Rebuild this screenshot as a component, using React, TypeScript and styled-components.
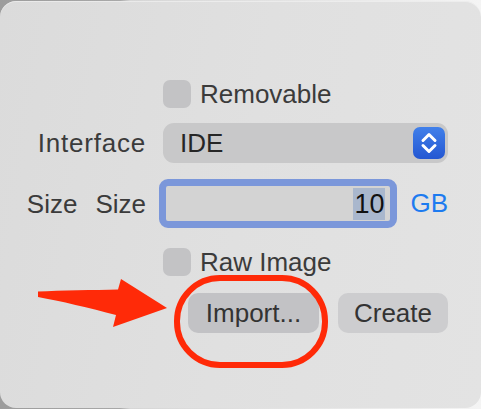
import React from "react";
import styled, { createGlobalStyle } from "styled-components";

const Global = createGlobalStyle`
  html, body { margin: 0; padding: 0; }
  body {
    width: 481px;
    height: 409px;
    overflow: hidden;
    background: linear-gradient(90deg, #9c9c9c 0px, #a8a8a8 120px, #d6d6d6 130px, #f4f4f4 481px);
    font-family: "Liberation Sans", Arial, sans-serif;
  }
`;

const Panel = styled.div`
  position: relative;
  box-sizing: border-box;
  width: 481px;
  height: 407px;
  margin-top: 1px;
  border-radius: 16px;
  background: linear-gradient(100deg, #dbdbdb 0%, #e0e0e0 50%, #e3e3e3 100%);
  box-shadow: inset 0 1px 0 rgba(255,255,255,0.4);
  padding-top: 79px;
  display: flex;
  flex-direction: column;
`;

const Row = styled.div<{ $top: number; $h: number }>`
  display: grid;
  grid-template-columns: 146px 285px;
  column-gap: 17px;
  align-items: center;
  height: ${(p) => p.$h}px;
  margin-top: ${(p) => p.$top}px;
`;

const Label = styled.div<{ $spacing?: number }>`
  justify-self: end;
  display: flex;
  gap: 18px;
  font-size: 26px;
  color: #3b3b3b;
  line-height: 1;
  letter-spacing: ${(p) => p.$spacing ?? 0}px;
`;

const Check = styled.label`
  grid-column: 2;
  display: flex;
  align-items: center;
  gap: 9px;
  font-size: 26px;
  color: #3b3b3b;
  line-height: 1;
`;

const Box = styled.span`
  width: 28px;
  height: 28px;
  border-radius: 7px;
  background: #c3c3c5;
  flex: none;
`;

const Popup = styled.div`
  box-sizing: border-box;
  height: 40px;
  border-radius: 11px;
  background: #c8c8c9;
  display: flex;
  align-items: center;
  justify-content: space-between;
  padding: 0 3px 0 17px;
  font-size: 26px;
  color: #262626;
`;

const Stepper = styled.span`
  width: 32px;
  height: 32px;
  border-radius: 7px;
  background: linear-gradient(180deg, #4180ea 0%, #2457d2 100%);
  display: flex;
  align-items: center;
  justify-content: center;
`;

const FieldGroup = styled.div`
  display: flex;
  align-items: center;
  gap: 13px;
`;

const Field = styled.div`
  box-sizing: border-box;
  margin-left: -4px;
  width: 241px;
  height: 49px;
  border: 7px solid #7b97da;
  border-radius: 9px;
  background: #d3d3d3;
  display: flex;
  align-items: center;
  justify-content: flex-end;
  padding-right: 5px;
`;

const Selected = styled.span`
  background: #a9b7cd;
  color: #111;
  font-size: 27px;
  line-height: 32px;
  padding: 0 1px;
`;

const Unit = styled.span`
  font-size: 26px;
  color: #1d7bf0;
`;

const Buttons = styled.div`
  grid-column: 2;
  display: flex;
  justify-content: flex-end;
  gap: 19px;
`;

const Button = styled.button<{ $w: number; $dark?: boolean }>`
  box-sizing: border-box;
  width: ${(p) => p.$w}px;
  height: 40px;
  border: none;
  border-radius: 10px;
  background: ${(p) => (p.$dark ? "#c2c2c5" : "#cdcdcf")};
  font-family: "Liberation Sans", Arial, sans-serif;
  font-size: 26px;
  color: #333;
  padding: 0;
`;

const Ring = styled.div`
  position: absolute;
  left: 174px;
  top: 274px;
  width: 154px;
  height: 93px;
  box-sizing: border-box;
  border: 6px solid #ff2a08;
  border-radius: 46px;
  pointer-events: none;
`;

const Arrow = styled.svg`
  position: absolute;
  left: 0;
  top: 0;
  pointer-events: none;
`;

export default function App() {
  return (
    <>
      <Global />
      <Panel>
        <Row $top={0} $h={28}>
          <Check>
            <Box />
            Removable
          </Check>
        </Row>
        <Row $top={15} $h={40}>
          <Label $spacing={0.8}>Interface</Label>
          <Popup>
            IDE
            <Stepper>
              <svg width="20" height="24" viewBox="0 0 20 24" fill="none">
                <path d="M4 9.5 L10 3.5 L16 9.5" stroke="#fff" strokeWidth="3" strokeLinecap="round" strokeLinejoin="round" />
                <path d="M4 14.5 L10 20.5 L16 14.5" stroke="#fff" strokeWidth="3" strokeLinecap="round" strokeLinejoin="round" />
              </svg>
            </Stepper>
          </Popup>
        </Row>
        <Row $top={16} $h={49}>
          <Label>
            <span>Size</span>
            <span>Size</span>
          </Label>
          <FieldGroup>
            <Field>
              <Selected>10</Selected>
            </Field>
            <Unit>GB</Unit>
          </FieldGroup>
        </Row>
        <Row $top={20} $h={28}>
          <Check>
            <Box />
            Raw Image
          </Check>
        </Row>
        <Row $top={17} $h={40}>
          <Buttons>
            <Button $w={131} $dark>Import...</Button>
            <Button $w={110}>Create</Button>
          </Buttons>
        </Row>
        <Ring />
        <Arrow width="481" height="409" viewBox="0 0 481 409">
          <path
            d="M38 290.5 C60 289.5 95 289 118 288.5 L121 278 L167 307 L113 326 L116 314 C90 307 60 300 38 296 Z"
            fill="#ff2a08"
          />
        </Arrow>
      </Panel>
    </>
  );
}
